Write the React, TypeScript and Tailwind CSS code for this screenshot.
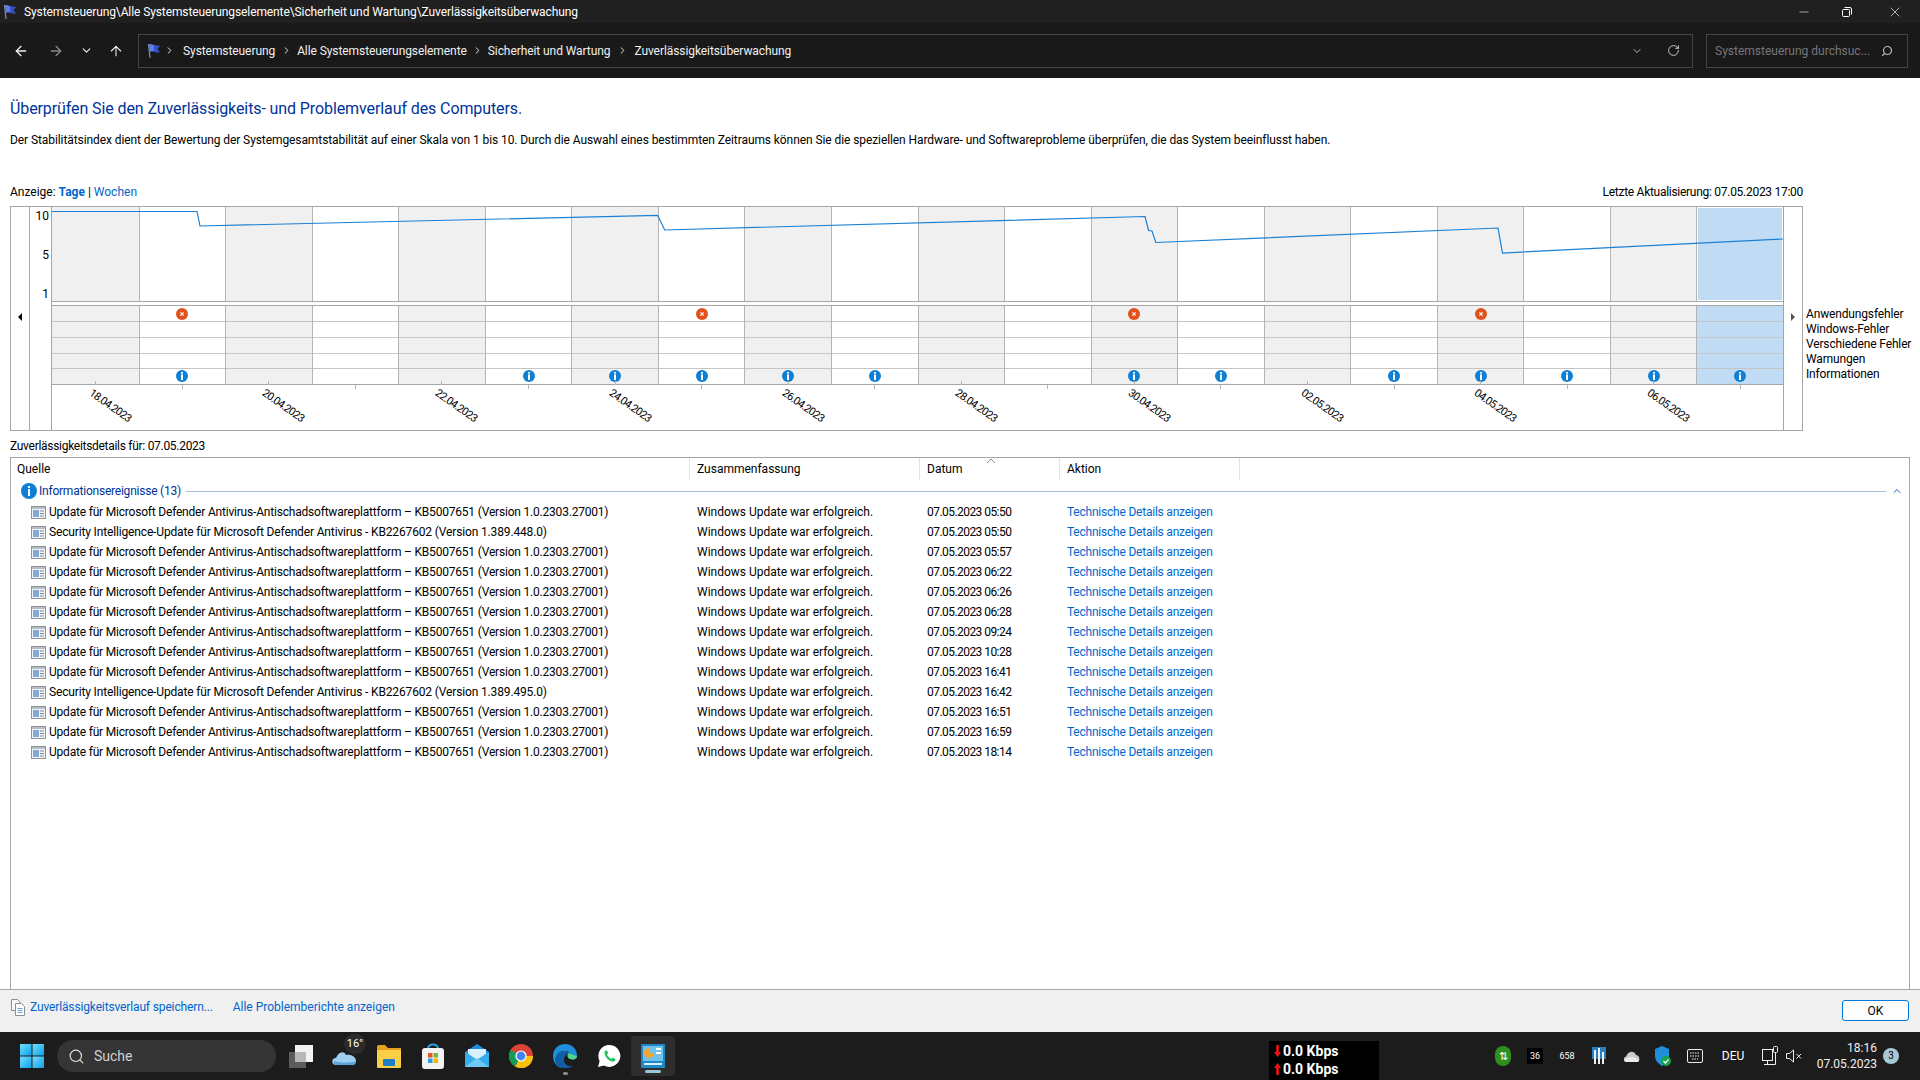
import { ChevronDown, ChevronRight, ArrowLeft, ArrowRight, ArrowUp, RotateCw, Search, Minus, X } from "lucide-react";

const dayCount = 20;
const infoDays = [1, 5, 6, 7, 8, 9, 12, 13, 15, 16, 17, 18, 19];
const errorDays = [1, 7, 12, 16];
const dateLabels: Record<number, string> = {
  0: "18.04.2023",
  2: "20.04.2023",
  4: "22.04.2023",
  6: "24.04.2023",
  8: "26.04.2023",
  10: "28.04.2023",
  12: "30.04.2023",
  14: "02.05.2023",
  16: "04.05.2023",
  18: "06.05.2023",
};

const platformUpdate = "Update für Microsoft Defender Antivirus-Antischadsoftwareplattform – KB5007651 (Version 1.0.2303.27001)";
const events = [
  { name: platformUpdate, time: "05:50" },
  { name: "Security Intelligence-Update für Microsoft Defender Antivirus - KB2267602 (Version 1.389.448.0)", time: "05:50" },
  { name: platformUpdate, time: "05:57" },
  { name: platformUpdate, time: "06:22" },
  { name: platformUpdate, time: "06:26" },
  { name: platformUpdate, time: "06:28" },
  { name: platformUpdate, time: "09:24" },
  { name: platformUpdate, time: "10:28" },
  { name: platformUpdate, time: "16:41" },
  { name: "Security Intelligence-Update für Microsoft Defender Antivirus - KB2267602 (Version 1.389.495.0)", time: "16:42" },
  { name: platformUpdate, time: "16:51" },
  { name: platformUpdate, time: "16:59" },
  { name: platformUpdate, time: "18:14" },
];

function Flag({ size = 16 }: { size?: number }) {
  return (
    <svg width={size} height={size} viewBox="0 0 16 16">
      <path d="M2.5 1 L4 15" stroke="#8a8fa8" strokeWidth="1.2" />
      <path d="M3 1.5 C6 0 8 3.5 14.5 2.5 L11.5 6 L14 9.5 C9 10 7 7.5 3.8 9 Z" fill="#3553c4" />
      <path d="M3 1.5 C5 1 6 2 8 2.6 L8 7.8 C6.5 7.6 5.2 8 3.8 9 Z" fill="#5f7fe6" />
    </svg>
  );
}

function InfoPin() {
  return (
    <svg width="12" height="12" viewBox="0 0 12 12" className="shrink-0">
      <circle cx="6" cy="6" r="6" fill="#0f7fd6" />
      <rect x="5" y="2" width="2" height="1.6" fill="#fff" />
      <rect x="5" y="4.4" width="2" height="5.6" fill="#fff" />
    </svg>
  );
}

function ErrorPin() {
  return (
    <svg width="12" height="12" viewBox="0 0 12 12" className="shrink-0">
      <circle cx="6" cy="6" r="6" fill="#e0511c" />
      <path d="M4.4 4.4 L7.6 7.6 M7.6 4.4 L4.4 7.6" stroke="#fff" strokeWidth="1.2" />
    </svg>
  );
}

function UpdateIcon() {
  return (
    <svg width="15" height="14" viewBox="0 0 15 14" className="shrink-0">
      <rect x="0.5" y="1.5" width="14" height="12" fill="#f4f5f7" stroke="#8d9299" />
      <rect x="1" y="2" width="13" height="2" fill="#b8bec6" />
      <rect x="2" y="5" width="6" height="7" fill="#7fa9d8" />
      <rect x="9" y="5.5" width="4" height="1" fill="#808890" />
      <rect x="9" y="8" width="4" height="1" fill="#808890" />
      <rect x="9" y="10.5" width="4" height="1" fill="#808890" />
    </svg>
  );
}

function StabilityChart() {
  return (
    <div className="flex h-[225px] w-[1793px] shrink-0 border border-[#a6a6a6] bg-white">
      <div className="flex w-[19px] shrink-0 items-start justify-center border-r border-[#a6a6a6] pt-[106px]">
        <div className="h-0 w-0 border-y-[4px] border-r-[4px] border-y-transparent border-r-black" />
      </div>
      <div className="flex w-[22px] shrink-0 flex-col items-end border-r border-[#a6a6a6] pr-[2px] text-[12px] leading-[16px] text-black">
        <span className="mt-[1px]">10</span>
        <span className="mt-[23px]">5</span>
        <span className="mt-[23px]">1</span>
      </div>

      <div className="relative flex min-w-0 flex-1 flex-col">
        <div className="grid h-[95px] grid-cols-[repeat(20,minmax(0,1fr))] border-b border-[#a6a6a6]">
          {Array.from({ length: dayCount }, (_, i) => (
            <div key={i} className="border-l border-[#b4b4b4] first:border-l-0">
              <div className={i === 19 ? "ml-[1px] mt-[1px] mr-[1px] h-[92px] bg-[#c0dcf5]" : i % 2 === 0 ? "h-full bg-[#f0f0f0]" : "h-full"} />
            </div>
          ))}
        </div>
        <svg className="absolute left-0 top-0" width="1731" height="95" viewBox="0 0 1731 95">
          <polyline
            fill="none"
            stroke="#1a80d4"
            strokeWidth="1.2"
            points="0,4.5 145,4.5 148,19 605.6,8.3 612.7,23 1093,9.5 1096.6,23.5 1100,24 1103.8,35.5 1446,21 1450.5,46 1731,32"
          />
        </svg>

        <div className="mt-[3px] grid h-[80px] grid-cols-[repeat(20,minmax(0,1fr))] border-y border-[#a6a6a6]">
          {Array.from({ length: dayCount }, (_, i) => (
            <div
              key={i}
              className={`flex flex-col border-l border-[#b4b4b4] first:border-l-0 ${i === 19 ? "bg-[#c0dcf5]" : i % 2 === 0 ? "bg-[#f0f0f0]" : ""}`}
            >
              <div className="flex h-[16px] items-center justify-center border-b border-[#c4c4c4]">
                {errorDays.includes(i) && <ErrorPin />}
              </div>
              <div className="h-[16px] border-b border-[#c8c8c8]" />
              <div className="h-[16px] border-b border-[#c8c8c8]" />
              <div className="h-[15px] border-b border-[#c4c4c4]" />
              <div className="flex h-[15px] items-center justify-center pb-[1px]">
                {infoDays.includes(i) && <InfoPin />}
              </div>
            </div>
          ))}
        </div>

        <div className="grid flex-1 grid-cols-[repeat(20,minmax(0,1fr))]">
          {Array.from({ length: dayCount }, (_, i) => (
            <div key={i} className="relative">
              <div className={`absolute left-1/2 w-px bg-[#b4b4b4] ${i % 2 === 0 ? "-top-[4px] h-[4px]" : "top-0 h-[4px]"}`} />
              {dateLabels[i] && (
                <span className="absolute left-[calc(50%+15px)] top-[21px] -translate-x-1/2 -translate-y-1/2 rotate-[35deg] whitespace-nowrap text-[11px] leading-[12px] tracking-[-0.7px] text-black">
                  {dateLabels[i]}
                </span>
              )}
            </div>
          ))}
        </div>
      </div>

      <div className="flex w-[19px] shrink-0 items-start justify-center border-l border-[#a6a6a6] pt-[106px]">
        <div className="h-0 w-0 border-y-[4px] border-l-[4px] border-y-transparent border-l-[#555]" />
      </div>
    </div>
  );
}

function EventTable() {
  return (
    <div className="mt-[3px] min-h-0 flex-1 border-x border-t border-[#a6a6a6] bg-white">
      <div className="relative grid h-[22px] grid-cols-[679px_230px_140px_180px] items-stretch">
        {["Quelle", "Zusammenfassung", "Datum", "Aktion"].map((title) => (
          <div key={title} className="flex items-center border-r border-[#e5e5e5] pl-[7px] first:pl-[6px] text-black">
            {title}
          </div>
        ))}
        <svg className="absolute left-[975px] top-0" width="10" height="6" viewBox="0 0 10 6">
          <path d="M1 5 L5 1 L9 5" fill="none" stroke="#8a8a8a" />
        </svg>
      </div>

      <div className="flex h-[22px] items-center pl-[10px] pr-[6px]">
        <svg width="16" height="16" viewBox="0 0 16 16" className="shrink-0">
          <circle cx="8" cy="8" r="8" fill="#0f7fd6" />
          <rect x="7" y="3" width="2" height="2" fill="#fff" />
          <rect x="7" y="6" width="2" height="7" fill="#fff" />
        </svg>
        <span className="ml-[2px] tracking-[-0.22px] text-[#003399]">Informationsereignisse (13)</span>
        <div className="ml-[5px] h-px flex-1 bg-[#a9bbe6]" />
        <ChevronDown className="ml-[5px] rotate-180 text-[#1a5fb4]" size={12} strokeWidth={2} />
      </div>

      {events.map((event, i) => (
        <div key={i} className="grid h-[20px] grid-cols-[679px_230px_140px_180px] items-center">
          <div className="flex items-center pl-[20px]">
            <UpdateIcon />
            <span className={`ml-[3px] whitespace-nowrap text-black ${event.name === platformUpdate ? "tracking-[-0.2px]" : "tracking-[-0.15px]"}`}>
              {event.name}
            </span>
          </div>
          <div className="whitespace-nowrap pl-[7px] text-black">Windows Update war erfolgreich.</div>
          <div className="whitespace-nowrap pl-[7px] tracking-[-0.55px] text-black">07.05.2023 {event.time}</div>
          <div className="whitespace-nowrap pl-[7px] tracking-[-0.22px] text-[#0066cc]">Technische Details anzeigen</div>
        </div>
      ))}
    </div>
  );
}

function WindowsLogo() {
  return (
    <svg width="24" height="24" viewBox="0 0 24 24">
      <defs>
        <linearGradient id="win" x1="0" y1="0" x2="1" y2="1">
          <stop offset="0" stopColor="#6fe0ff" />
          <stop offset="1" stopColor="#0f9fe8" />
        </linearGradient>
      </defs>
      <rect x="0" y="0" width="11.5" height="11.5" fill="url(#win)" />
      <rect x="12.5" y="0" width="11.5" height="11.5" fill="url(#win)" />
      <rect x="0" y="12.5" width="11.5" height="11.5" fill="url(#win)" />
      <rect x="12.5" y="12.5" width="11.5" height="11.5" fill="url(#win)" />
    </svg>
  );
}

function TaskIcon({ children, active, dot }: { children: React.ReactNode; active?: boolean; dot?: boolean }) {
  return (
    <div className={`relative flex h-[40px] w-[44px] items-center justify-center rounded-[4px] ${active ? "bg-[#2d2d2d]" : ""}`}>
      {children}
      {active && <div className="absolute bottom-[3px] left-[14px] h-[3px] w-[16px] rounded-full bg-[#9cc6d6]" />}
      {dot && <div className="absolute bottom-[1px] left-[20px] h-[3px] w-[5px] rounded-full bg-[#8a8a8a]" />}
    </div>
  );
}

function NetArrow({ up }: { up?: boolean }) {
  return (
    <svg width="7" height="12" viewBox="0 0 7 12" className={up ? "" : "rotate-180"}>
      <path d="M3.5 0 L7 5 L4.8 5 L4.8 12 L2.2 12 L2.2 5 L0 5 Z" fill="#f01414" />
    </svg>
  );
}

function Taskbar() {
  return (
    <div className="flex h-[48px] shrink-0 items-center bg-[#1c1c1c] pl-[20px] pr-[21px]">
      <WindowsLogo />
      <div className="ml-[13px] flex h-[32px] w-[219px] items-center rounded-full bg-[#353535] pl-[11px] text-[14px] text-[#d0d0d0]">
        <Search size={17} strokeWidth={1.6} className="text-[#e5e5e5]" />
        <span className="ml-[9px]">Suche</span>
      </div>

      <div className="ml-[3px] flex">
        <TaskIcon>
          <svg width="24" height="24" viewBox="0 0 24 24">
            <rect x="0" y="8" width="17" height="16" fill="#5c5c5c" />
            <rect x="6" y="1" width="18" height="17" fill="#f2f2f2" />
            <rect x="6" y="8" width="11" height="10" fill="#b8b8b8" />
          </svg>
        </TaskIcon>
        <TaskIcon>
          <div className="relative">
            <svg width="26" height="20" viewBox="0 0 26 20">
              <path d="M4 19 C-1 19 -1 12 4 12 C6 6 12 4 14 9 C19 8 24 11 24 15 C24 18 22 19 20 19 Z" fill="#9ecff2" />
              <path d="M2 15 C8 17 18 17 24 15 L24 16 C23 18 22 19 20 19 L4 19 C2 19 1 17 2 15 Z" fill="#5ba5dd" />
            </svg>
            <span className="absolute -right-[8px] -top-[12px] flex h-[20px] w-[22px] items-center justify-center rounded-full bg-[#2b2b2b] text-[11px] text-white">
              16°
            </span>
          </div>
        </TaskIcon>
        <TaskIcon>
          <svg width="24" height="24" viewBox="0 0 24 24">
            <path d="M0 3 Q0 1 2 1 L8 1 L11 4 L24 4 L24 8 L0 8 Z" fill="#e5a11f" />
            <rect x="0" y="6" width="24" height="18" rx="1" fill="#f9cf48" />
            <rect x="6" y="15" width="12" height="7" rx="1" fill="#1f7fc4" />
          </svg>
        </TaskIcon>
        <TaskIcon>
          <svg width="24" height="26" viewBox="0 0 24 26">
            <path d="M7 6 C7 0 17 0 17 6" fill="none" stroke="#2aa3e8" strokeWidth="2" />
            <rect x="1" y="5" width="22" height="21" rx="3" fill="#f2f2f2" />
            <rect x="7" y="10" width="4.5" height="4.5" fill="#e8532a" />
            <rect x="12.5" y="10" width="4.5" height="4.5" fill="#7cb82f" />
            <rect x="7" y="15.5" width="4.5" height="4.5" fill="#2a9fe8" />
            <rect x="12.5" y="15.5" width="4.5" height="4.5" fill="#f4b400" />
          </svg>
        </TaskIcon>
        <TaskIcon>
          <svg width="24" height="24" viewBox="0 0 24 24">
            <path d="M12 0 L24 8 L24 23 L0 23 L0 8 Z" fill="#1b8fdc" />
            <path d="M3 5 L21 5 L21 10 L12 16 L3 10 Z" fill="#d6f0ff" />
            <path d="M0 8 L12 16 L24 8 L24 23 L0 23 Z" fill="#35aef0" />
            <path d="M0 23 L12 14 L24 23 Z" fill="#6fcaf7" />
          </svg>
        </TaskIcon>
        <TaskIcon>
          <svg width="24" height="24" viewBox="0 0 24 24">
            <circle cx="12" cy="12" r="12" fill="#db4437" />
            <path d="M12 12 L22.4 18 A12 12 0 0 1 6 22.4 Z" fill="#f4c20d" />
            <path d="M12 12 L6 22.4 A12 12 0 0 1 1.6 6 Z" fill="#0f9d58" />
            <path d="M12 12 L24 12 A12 12 0 0 1 12 24 Z" fill="#f4c20d" />
            <circle cx="12" cy="12" r="5.6" fill="#fff" />
            <circle cx="12" cy="12" r="4.4" fill="#4285f4" />
          </svg>
        </TaskIcon>
        <TaskIcon dot>
          <svg width="24" height="26" viewBox="0 0 24 26">
            <path d="M12 1 C20 1 24 7 24 13 C24 16 21 17 17 16 C14 15 14 11 16 10 C14 7 6 7 3 14 C1 19 5 25 12 25 C5 26 0 20 0 13 C0 6 5 1 12 1 Z" fill="#1f8fdc" />
            <path d="M3 14 C6 7 14 7 16 10 C14 11 11 13 11 17 C11 21 15 24 20 23 C17 25 14 25 12 25 C5 25 1 19 3 14 Z" fill="#0f5fa8" />
            <path d="M16 10 C18 11 20 12 24 13 C24 16 21 17 17 16 C14 15 14 11 16 10 Z" fill="#4fd68a" />
          </svg>
        </TaskIcon>
        <TaskIcon>
          <svg width="24" height="24" viewBox="0 0 24 24">
            <path d="M1 23 L2.6 17 A11 11 0 1 1 7 21.5 Z" fill="#fff" />
            <path d="M8.5 6.5 C7 7.5 7 10 9 13 C11 16 14 18 16.5 17.6 C18 17.2 18.6 15.8 18.4 15 L15.6 13.6 L14.4 15 C13 14.5 10.8 12.5 10 10.6 L11.2 9.4 L10 6.6 Z" fill="#25c15f" />
          </svg>
        </TaskIcon>
        <TaskIcon active>
          <svg width="24" height="24" viewBox="0 0 24 24">
            <rect x="0" y="0" width="24" height="24" rx="1" fill="#1f88c9" />
            <rect x="2" y="2" width="20" height="15" fill="#6fc3ea" />
            <path d="M8 4 A5 5 0 1 0 13 9 L8 9 Z" fill="#f4a428" />
            <rect x="15" y="4" width="5" height="2" fill="#fff" />
            <rect x="15" y="8" width="5" height="2" fill="#fff" />
            <rect x="3" y="19" width="18" height="2" fill="#d8eef8" />
          </svg>
        </TaskIcon>
      </div>

      <div className="flex-1" />

      <div className="flex h-[39px] w-[110px] flex-col justify-center self-end bg-black pb-[2px] pl-[5px] text-[14px] font-bold leading-[18px] text-white">
        <div className="flex items-center">
          <NetArrow />
          <span className="ml-[2px]">0.0 Kbps</span>
        </div>
        <div className="flex items-center">
          <NetArrow up />
          <span className="ml-[2px]">0.0 Kbps</span>
        </div>
      </div>

      <div className="ml-[108px] flex items-center text-white">
        <div className="flex w-[32px] justify-center">
          <div className="flex h-[20px] w-[16px] items-center justify-center rounded-full bg-[#2f8f1e] text-[11px] leading-none">⇅</div>
        </div>
        <div className="flex w-[32px] justify-center">
          <div className="flex h-[16px] w-[16px] items-center justify-center rounded-[2px] bg-black text-[9px]">36</div>
        </div>
        <div className="flex w-[32px] justify-center text-[9px]">658</div>
        <div className="flex w-[32px] justify-center">
          <svg width="14" height="18" viewBox="0 0 14 18">
            <rect x="0" y="0" width="14" height="12" fill="#2a7fc0" />
            <rect x="2" y="3" width="2" height="14" fill="#f0f0f0" />
            <rect x="6" y="1" width="2" height="16" fill="#f0f0f0" />
            <rect x="10" y="5" width="2" height="12" fill="#f0f0f0" />
          </svg>
        </div>
        <div className="flex w-[32px] justify-center">
          <svg width="17" height="12" viewBox="0 0 17 12">
            <path d="M4 12 C0 12 0 7 3 6.5 C5 1 11 0 13 5 C16 5 17 9 16 10.5 C15.5 11.5 15 12 14 12 Z" fill="#c9c9c9" />
            <path d="M4 12 C0 12 1 9 4 8 C8 6 12 7 16 10.5 C15.5 11.5 15 12 14 12 Z" fill="#ececec" />
          </svg>
        </div>
        <div className="flex w-[32px] justify-center">
          <svg width="16" height="20" viewBox="0 0 16 20">
            <path d="M7 0 L14 3 L14 10 C14 15 10 18 7 20 C4 18 0 15 0 10 L0 3 Z" fill="#1f8fdc" />
            <circle cx="11" cy="15" r="5" fill="#17a34a" />
            <path d="M8.5 15 L10.4 17 L13.5 13.4" fill="none" stroke="#fff" strokeWidth="1.2" />
          </svg>
        </div>
        <div className="flex w-[32px] justify-center">
          <svg width="16" height="14" viewBox="0 0 16 14" fill="none" stroke="#eee">
            <rect x="0.5" y="0.5" width="15" height="13" rx="1.5" />
            <path d="M3 4 H13 M3 7 H13 M5 10 H11" strokeDasharray="1.5 1" />
          </svg>
        </div>
        <div className="flex w-[44px] justify-center text-[12px]">DEU</div>
        <div className="flex w-[30px] justify-center">
          <svg width="16" height="20" viewBox="0 0 16 20" fill="none" stroke="#eee">
            <rect x="0.5" y="3.5" width="10" height="11" />
            <path d="M5.5 14.5 V18 M2 18.5 H9" />
            <rect x="11.5" y="0.5" width="4" height="6" rx="1" />
            <path d="M13.5 6.5 V18.5 H9" />
          </svg>
        </div>
        <div className="flex w-[18px] justify-center">
          <svg width="16" height="14" viewBox="0 0 16 14" fill="none" stroke="#eee">
            <path d="M0.5 4.5 H3.5 L7.5 1 V13 L3.5 9.5 H0.5 Z" />
            <path d="M10.5 5 L15 9.5 M15 5 L10.5 9.5" />
          </svg>
        </div>
        <div className="w-[74px] text-right text-[12px] leading-[16px] text-[#f0f0f0]">
          <div>18:16</div>
          <div>07.05.2023</div>
        </div>
        <div className="ml-[6px] flex h-[16px] w-[16px] items-center justify-center rounded-full bg-[#a8c8d8] text-[10px] text-black">3</div>
      </div>
    </div>
  );
}

export default function App() {
  return (
    <div className="flex h-[1080px] w-[1920px] flex-col overflow-hidden bg-white font-['Roboto','Liberation_Sans',sans-serif] text-[12px] leading-[16px]">
      {/* Title bar */}
      <div className="flex h-[23px] shrink-0 items-center bg-[#202020] pl-[2px] text-white">
        <Flag />
        <span className="ml-[6px] tracking-[-0.1px]">Systemsteuerung\Alle Systemsteuerungselemente\Sicherheit und Wartung\Zuverlässigkeitsüberwachung</span>
        <div className="ml-auto flex items-center pr-[17px]">
          <Minus size={14} strokeWidth={1} className="mr-[31px]" />
          <svg width="10" height="10" viewBox="0 0 10 10" fill="none" stroke="#fff" className="mr-[35px]">
            <rect x="0.5" y="2.5" width="7" height="7" rx="1" />
            <path d="M2.5 0.5 H8 Q9.5 0.5 9.5 2 V7.5" />
          </svg>
          <X size={16} strokeWidth={1} />
        </div>
      </div>

      {/* Address bar */}
      <div className="flex h-[55px] shrink-0 items-center bg-[#191919] text-[#f0f0f0]">
        <ArrowLeft size={16} className="ml-[13px]" strokeWidth={2} />
        <ArrowRight size={16} className="ml-[19px] text-[#8a8a8a]" strokeWidth={2} />
        <ChevronDown size={13} className="ml-[16px]" strokeWidth={2} />
        <ArrowUp size={16} className="ml-[15px]" strokeWidth={1.6} />
        <div className="ml-[14px] flex h-[34px] w-[1555px] items-center border border-[#444] pl-[7px] tracking-[-0.08px]">
          <Flag />
          <ChevronRight size={11} className="ml-[2px]" strokeWidth={2} />
          <span className="ml-[8px]">Systemsteuerung</span>
          <ChevronRight size={11} className="ml-[6px]" strokeWidth={2} />
          <span className="ml-[5px]">Alle Systemsteuerungselemente</span>
          <ChevronRight size={11} className="ml-[5px]" strokeWidth={2} />
          <span className="ml-[5px]">Sicherheit und Wartung</span>
          <ChevronRight size={11} className="ml-[7px]" strokeWidth={2} />
          <span className="ml-[6px]">Zuverlässigkeitsüberwachung</span>
          <ChevronDown size={12} className="ml-auto text-[#ddd]" strokeWidth={1.6} />
          <RotateCw size={13} className="ml-[24px] mr-[12px] text-[#ddd]" strokeWidth={1.6} />
        </div>
        <div className="ml-[13px] flex h-[34px] w-[202px] items-center border border-[#444] pl-[8px] text-[#777]">
          <span className="whitespace-nowrap">Systemsteuerung durchsuc...</span>
          <Search size={12} className="ml-auto mr-[14px] -scale-x-100 text-[#bbb]" strokeWidth={2.4} />
        </div>
      </div>

      {/* Content */}
      <div className="flex min-h-0 flex-1 flex-col pl-[10px] pr-[10px] pt-[19px] text-black">
        <h1 className="text-[16px] leading-[24px] tracking-[-0.1px] text-[#003399]">
          Überprüfen Sie den Zuverlässigkeits- und Problemverlauf des Computers.
        </h1>
        <p className="mt-[11px] tracking-[-0.085px]">
          Der Stabilitätsindex dient der Bewertung der Systemgesamtstabilität auf einer Skala von 1 bis 10. Durch die Auswahl eines bestimmten Zeitraums können Sie die speziellen Hardware- und Softwareprobleme überprüfen, die das System beeinflusst haben.
        </p>
        <div className="mt-[36px] flex w-[1793px] justify-between">
          <div>
            Anzeige: <span className="font-bold text-[#0066cc]">Tage</span> | <span className="text-[#0066cc]">Wochen</span>
          </div>
          <div className="tracking-[-0.28px]">Letzte Aktualisierung: 07.05.2023 17:00</div>
        </div>

        <div className="mt-[6px] flex">
          <StabilityChart />
          <div className="ml-[3px] mt-[101px] whitespace-nowrap leading-[15px] tracking-[-0.15px]">
            <div>Anwendungsfehler</div>
            <div>Windows-Fehler</div>
            <div>Verschiedene Fehler</div>
            <div>Warnungen</div>
            <div>Informationen</div>
          </div>
        </div>

        <div className="mt-[7px] tracking-[-0.29px]">Zuverlässigkeitsdetails für: 07.05.2023</div>
        <EventTable />
      </div>

      {/* Footer */}
      <div className="flex h-[43px] shrink-0 items-center border-t border-[#a6a6a6] bg-[#f0f0f0] pb-[8px] pl-[11px] pr-[11px] text-[#0066cc]">
        <svg width="14" height="17" viewBox="0 0 14 17" fill="none" stroke="#8a8f96">
          <path d="M0.5 0.5 H6.5 L9 3 V11.5 H0.5 Z" fill="#f7f7f7" />
          <path d="M4.5 4.5 H10.5 L13.5 7.5 V16.5 H4.5 Z" fill="#fff" />
          <path d="M6.5 9.5 H11.5 M6.5 11.5 H11.5 M6.5 13.5 H11.5" stroke="#6a9bd0" />
        </svg>
        <span className="ml-[5px] tracking-[-0.14px]">Zuverlässigkeitsverlauf speichern...</span>
        <span className="ml-[20px]">Alle Problemberichte anzeigen</span>
        <button className="ml-auto mt-[7px] flex h-[21px] w-[67px] items-center justify-center rounded-[3px] border border-[#0078d7] bg-[#fdfdfd] text-black">
          OK
        </button>
      </div>

      <Taskbar />
    </div>
  );
}
